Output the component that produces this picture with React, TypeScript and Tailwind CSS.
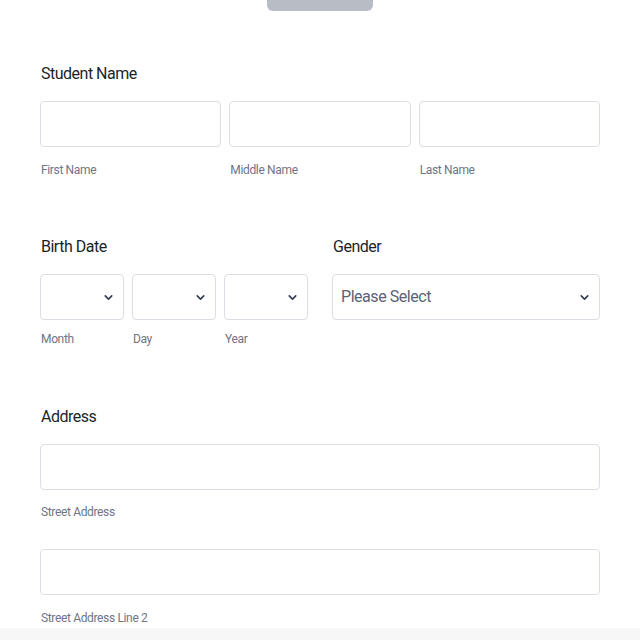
import { ChevronDown } from 'lucide-react';

const font = { fontFamily: 'Roboto, "Liberation Sans", sans-serif' };

function FieldLabel({ children }: { children: string }) {
  return <h3 className="h-6 pl-px text-[16px] leading-6 tracking-[-0.5px] text-[#1b1f2b]">{children}</h3>;
}

function Sub({ children, className = '' }: { children: string; className?: string }) {
  return <span className={`block pl-px text-[12px] leading-4 tracking-[-0.35px] text-[#6f7486] ${className}`}>{children}</span>;
}

function TextBox() {
  return (
    <input
      type="text"
      className="block h-[46px] w-full rounded-[4px] border border-[#dcdee6] bg-white px-2 outline-none"
    />
  );
}

function SelectBox({ text }: { text?: string }) {
  return (
    <div className="flex h-[46px] w-full items-center justify-between rounded-[4px] border border-[#dcdee6] bg-white pl-2 pr-[8px]">
      <span className="text-[16px] tracking-[-0.45px] text-[#5b6275]">{text ?? ''}</span>
      <ChevronDown size={13} strokeWidth={3} className="text-[#343b52]" />
    </div>
  );
}

export default function App() {
  return (
    <div className="flex min-h-screen flex-col bg-white" style={font}>
      <div className="mx-auto h-[11px] w-[106px] rounded-b-[6px] bg-[#b7bcc5]" />

      <main className="px-[40px]">
        {/* student name */}
        <section className="mt-[51px]">
          <FieldLabel>Student Name</FieldLabel>
          <div className="mt-[15px] grid grid-cols-3 gap-2">
            {['First Name', 'Middle Name', 'Last Name'].map((s) => (
              <div key={s}>
                <TextBox />
                <Sub className="mt-[15px]">{s}</Sub>
              </div>
            ))}
          </div>
        </section>

        {/* birth date + gender */}
        <section className="mt-[57px] grid grid-cols-2 gap-6">
          <div>
            <FieldLabel>Birth Date</FieldLabel>
            <div className="mt-[15px] grid grid-cols-3 gap-2">
              {['Month', 'Day', 'Year'].map((s) => (
                <div key={s}>
                  <SelectBox />
                  <Sub className="mt-[11px]">{s}</Sub>
                </div>
              ))}
            </div>
          </div>
          <div>
            <FieldLabel>Gender</FieldLabel>
            <div className="mt-[15px]">
              <SelectBox text="Please Select" />
            </div>
          </div>
        </section>

        {/* address */}
        <section className="mt-[58px]">
          <FieldLabel>Address</FieldLabel>
          <div className="mt-[15px]">
            <TextBox />
            <Sub className="mt-[14px]">Street Address</Sub>
          </div>
          <div className="mt-[29px]">
            <TextBox />
            <Sub className="mt-[15px]">Street Address Line 2</Sub>
          </div>
        </section>
      </main>

      <div className="mt-[2px] flex-1 bg-[#f7f7f8]" />
    </div>
  );
}
